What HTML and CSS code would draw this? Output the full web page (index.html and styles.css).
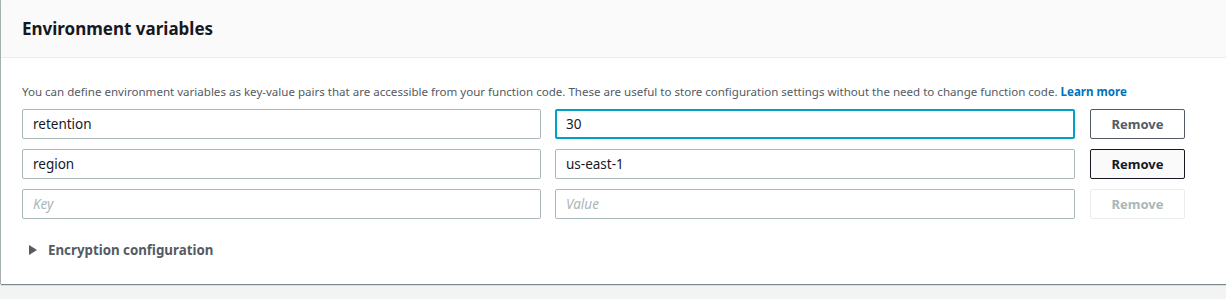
FILE: index.html
```html
<!DOCTYPE html>
<html>
<head>
<meta charset="utf-8">
<link rel="stylesheet" href="styles.css">
</head>
<body>
<div class="panel">
  <div class="panel-header">
    <h2 class="title">Environment variables</h2>
  </div>
  <div class="panel-body">
    <p class="desc">You can define environment variables as key-value pairs that are accessible from your function code. These are useful to store configuration settings without the need to change function code. <a class="link" href="#">Learn more</a></p>
    <div class="rows">
      <div class="field">retention</div>
      <div class="field focused">30</div>
      <button class="btn">Remove</button>
      <div class="field">region</div>
      <div class="field">us-east-1</div>
      <button class="btn hover">Remove</button>
      <div class="field placeholder">Key</div>
      <div class="field placeholder">Value</div>
      <button class="btn disabled">Remove</button>
    </div>
    <div class="expander">
      <svg class="caret" width="8" height="10" viewBox="0 0 8 10"><path d="M0 0 L8 5 L0 10 Z" fill="#545b64"/></svg>
      <span class="exp-label">Encryption configuration</span>
    </div>
  </div>
</div>
</body>
</html>
```
FILE: styles.css
```css
html, body {
  margin: 0;
  padding: 0;
}
body {
  background: #f2f3f3;
  font-family: "Noto Sans", "Open Sans", sans-serif;
  color: #16191f;
  overflow: hidden;
  width: 1226px;
  height: 299px;
  padding-left: 1px;
  box-sizing: border-box;
}
.panel {
  width: 1260px;
  background: #fff;
  box-shadow: 0 1px 1px 0 rgba(0,28,36,.5), -1px 0 0 0 rgba(0,28,36,.25);
  height: 284px;
}
.panel-header {
  background: #fafafa;
  border-bottom: 1px solid #eaeded;
  height: 58px;
  box-sizing: border-box;
  padding: 0 0 0 21px;
  display: flex;
  align-items: center;
}
.title {
  margin: 0;
  font-size: 17px;
  font-weight: 700;
  color: #16191f;
  line-height: 24px;
  padding-top: 1px;
}
.panel-body {
  padding: 26px 0 0 21px;
}
.desc {
  margin: 0;
  font-size: 11.55px;
  line-height: 16px;
  color: #545b64;
}
.link {
  color: #0073bb;
  font-weight: 700;
  text-decoration: none;
}
.rows {
  margin-top: 9px;
  display: grid;
  grid-template-columns: 519px 520px 96px;
  column-gap: 14px;
  row-gap: 10px;
  align-items: stretch;
}
.field {
  height: 30px;
  box-sizing: border-box;
  border: 1px solid #aab7b8;
  border-radius: 2px;
  padding: 0 10px;
  font-size: 13.5px;
  line-height: 28px;
  color: #16191f;
}
.field.focused {
  border: 2px solid #00a1c9;
  padding: 0 9px;
  line-height: 26px;
}
.field.placeholder {
  color: #aab7b8;
  font-style: italic;
}
.btn {
  margin-left: 1px;
  height: 30px;
  box-sizing: border-box;
  border: 1px solid #545b64;
  border-radius: 2px;
  background: #fff;
  font-family: inherit;
  font-size: 13px;
  font-weight: 700;
  color: #545b64;
  padding: 0;
}
.btn.hover {
  border-color: #16191f;
  background: #fafafa;
  color: #16191f;
}
.btn.disabled {
  border-color: #eaeded;
  color: #aab7b8;
}
.expander {
  margin-top: 21px;
  display: flex;
  align-items: center;
  height: 20px;
  padding-left: 7px;
}
.caret {
  display: block;
}
.exp-label {
  margin-left: 11px;
  font-size: 13.3px;
  font-weight: 700;
  color: #545b64;
}
```
